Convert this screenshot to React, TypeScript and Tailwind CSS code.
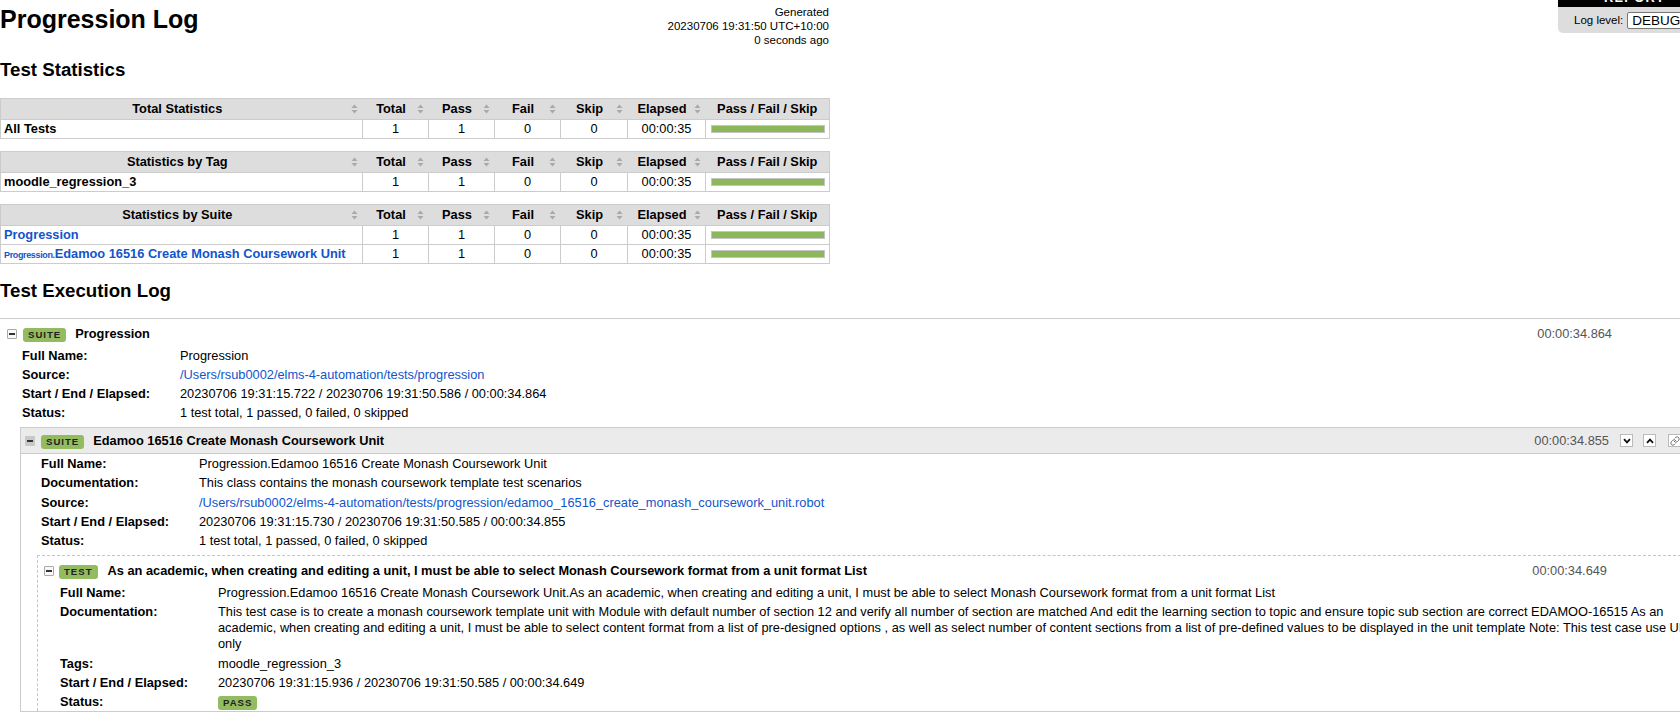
import React from "react";
import { Link as LinkIcon } from "lucide-react";

type StatRow = {
  name: React.ReactNode;
  total: number;
  pass: number;
  fail: number;
  skip: number;
  elapsed: string;
};

type MetaRow = {
  label: string;
  value: React.ReactNode;
  doc?: boolean;
};

const SortIcon = () => (
  <svg width="7" height="10" viewBox="0 0 7 10" className="shrink-0">
    <path d="M3.5 0.5 L6.5 4 H0.5 Z" fill="#a9a9a9" />
    <path d="M3.5 9.5 L6.5 6 H0.5 Z" fill="#a9a9a9" />
  </svg>
);

function SortHeader({ label, width }: { label: string; width: string }) {
  return (
    <th className={`${width} px-[5px] font-bold`}>
      <div className="flex items-center gap-[2px]">
        <span className="flex-1 text-center">{label}</span>
        <SortIcon />
      </div>
    </th>
  );
}

function StatTable({ title, rows }: { title: string; rows: StatRow[] }) {
  return (
    <table className="mb-[12px] w-[829px] table-fixed border-collapse border border-[#ccc]">
      <thead>
        <tr className="h-[21px] bg-[#ddd]">
          <SortHeader label={title} width="w-[362px]" />
          <SortHeader label="Total" width="w-[66px]" />
          <SortHeader label="Pass" width="w-[66px]" />
          <SortHeader label="Fail" width="w-[66px]" />
          <SortHeader label="Skip" width="w-[67px]" />
          <SortHeader label="Elapsed" width="w-[78px]" />
          <th className="w-[124px] px-[3px] text-center font-bold">Pass / Fail / Skip</th>
        </tr>
      </thead>
      <tbody>
        {rows.map((r, i) => (
          <tr key={i} className="h-[19px]">
            <td className="overflow-hidden whitespace-nowrap border border-[#ccc] px-[3px] font-bold">{r.name}</td>
            <td className="border border-[#ccc] text-center">{r.total}</td>
            <td className="border border-[#ccc] text-center">{r.pass}</td>
            <td className="border border-[#ccc] text-center">{r.fail}</td>
            <td className="border border-[#ccc] text-center">{r.skip}</td>
            <td className="border border-[#ccc] text-center">{r.elapsed}</td>
            <td className="border border-[#ccc] pl-[5px] pr-[4px]">
              <div className="h-[8px] border border-[#c4c4c4] bg-[#8db75b]" />
            </td>
          </tr>
        ))}
      </tbody>
    </table>
  );
}

function Toggle({ filled }: { filled?: boolean }) {
  return (
    <div
      className={
        filled
          ? "flex h-[10px] w-[10px] shrink-0 items-center justify-center rounded-[1px] bg-[#c8c8c8]"
          : "flex h-[10px] w-[10px] shrink-0 items-center justify-center rounded-[1px] border border-[#aaa] bg-[#f8f8f8]"
      }
    >
      <div className="h-[2px] w-[6px] bg-[#333]" />
    </div>
  );
}

function Badge({ children }: { children: React.ReactNode }) {
  return (
    <span className="inline-block shrink-0 rounded-[3px] bg-[#93bb5f] px-[5px] py-[2px] text-[9.6px] font-bold leading-[10px] tracking-[1px] text-[#222]">
      {children}
    </span>
  );
}

function HeaderButtons({ show }: { show?: boolean }) {
  return (
    <div className={show ? "ml-[11px] flex items-center" : "invisible ml-[11px] flex items-center"}>
      <div className="flex h-[13px] w-[13px] items-center justify-center border border-[#bbb] bg-white">
        <svg width="8" height="6" viewBox="0 0 8 6">
          <path d="M1 1.2 L4 4.4 L7 1.2" fill="none" stroke="#111" strokeWidth="1.8" />
        </svg>
      </div>
      <div className="ml-[10px] flex h-[13px] w-[13px] items-center justify-center border border-[#bbb] bg-white">
        <svg width="8" height="6" viewBox="0 0 8 6">
          <path d="M1 4.8 L4 1.6 L7 4.8" fill="none" stroke="#111" strokeWidth="1.8" />
        </svg>
      </div>
      <div className="ml-[12px] flex h-[13px] w-[13px] items-center justify-center border border-[#bbb] bg-white">
        <LinkIcon size={10} color="#555" strokeWidth={2} />
      </div>
    </div>
  );
}

function Meta({ rows, indent }: { rows: MetaRow[]; indent: string }) {
  return (
    <div className={indent}>
      {rows.map((r) => (
        <div
          key={r.label}
          className={r.doc ? "grid grid-cols-[158px_1fr] pb-[2px] pt-[2px]" : "grid grid-cols-[158px_1fr] py-[1.5px]"}
        >
          <div className="font-bold">{r.label}</div>
          <div className="whitespace-nowrap">{r.value}</div>
        </div>
      ))}
    </div>
  );
}

const link = "text-[#15c]";

export default function App() {
  return (
    <div className="relative h-[714px] w-[1680px] overflow-hidden bg-white font-['Liberation_Sans',Arial,sans-serif] text-[12.8px] leading-[16px] text-black">
      {/* report link + log level */}
      <div className="absolute right-0 top-0 w-[122px] overflow-hidden">
        <div className="h-[7px] overflow-hidden bg-black">
          <div className="-mt-[10px] whitespace-nowrap pl-[46px] font-bold leading-[16px] tracking-[0.1em] text-white">REPORT</div>
        </div>
        <div className="flex h-[26px] items-center whitespace-nowrap rounded-bl-[5px] bg-[#ddd] pl-[16px]">
          <span className="shrink-0 text-[11.5px]">Log level:</span>
          <div className="ml-[4px] flex h-[17px] shrink-0 items-center rounded-[2px] border border-[#777] bg-white pl-[4px] pr-[10px] text-[13.5px] leading-[15px]">
            DEBUG
          </div>
        </div>
      </div>

      <div className="flex h-[59px] w-[829px] items-start justify-between pt-[4px]">
        <h1 className="text-[25px] font-bold leading-[30px]">Progression Log</h1>
        <div className="pt-[1px] text-right text-[11.5px] leading-[14px]">
          <div>Generated</div>
          <div>20230706 19:31:50 UTC+10:00</div>
          <div>0 seconds ago</div>
        </div>
      </div>

      <h2 className="text-[18.7px] font-bold leading-[22px]">Test Statistics</h2>
      <div className="mt-[17px]">
        <StatTable
          title="Total Statistics"
          rows={[{ name: "All Tests", total: 1, pass: 1, fail: 0, skip: 0, elapsed: "00:00:35" }]}
        />
        <StatTable
          title="Statistics by Tag"
          rows={[{ name: "moodle_regression_3", total: 1, pass: 1, fail: 0, skip: 0, elapsed: "00:00:35" }]}
        />
        <StatTable
          title="Statistics by Suite"
          rows={[
            { name: <a className={link}>Progression</a>, total: 1, pass: 1, fail: 0, skip: 0, elapsed: "00:00:35" },
            {
              name: (
                <a className={link}>
                  <span className="text-[9px] tracking-[-0.04em]">Progression.</span>
                  Edamoo 16516 Create Monash Coursework Unit
                </a>
              ),
              total: 1,
              pass: 1,
              fail: 0,
              skip: 0,
              elapsed: "00:00:35",
            },
          ]}
        />
      </div>

      <h2 className="mt-[16px] text-[18.7px] font-bold leading-[22px]">Test Execution Log</h2>

      <div className="mt-[16px] w-[1692px] border-t border-[#ccc]">
        {/* top suite */}
        <div className="mt-[3px] flex h-[24px] items-center pl-[7px] pr-[8px]">
          <Toggle />
          <span className="ml-[6px]">
            <Badge>SUITE</Badge>
          </span>
          <span className="ml-[9px] font-bold">Progression</span>
          <span className="ml-auto text-[#555]">00:00:34.864</span>
          <HeaderButtons />
        </div>
        <Meta
          indent="pl-[22px]"
          rows={[
            { label: "Full Name:", value: "Progression" },
            { label: "Source:", value: <a className={link}>/Users/rsub0002/elms-4-automation/tests/progression</a> },
            { label: "Start / End / Elapsed:", value: "20230706 19:31:15.722 / 20230706 19:31:50.586 / 00:00:34.864" },
            { label: "Status:", value: "1 test total, 1 passed, 0 failed, 0 skipped" },
          ]}
        />

        {/* child suite */}
        <div className="ml-[20px] mt-[5px] border border-[#ccc]">
          <div className="flex h-[26px] items-center border-b border-[#ccc] bg-[#ebebeb] pl-[4px] pr-[10px]">
            <Toggle filled />
            <span className="ml-[6px]">
              <Badge>SUITE</Badge>
            </span>
            <span className="ml-[9px] font-bold">Edamoo 16516 Create Monash Coursework Unit</span>
            <span className="ml-auto text-[#555]">00:00:34.855</span>
            <HeaderButtons show />
          </div>
          <Meta
            indent="pl-[20px]"
            rows={[
              { label: "Full Name:", value: "Progression.Edamoo 16516 Create Monash Coursework Unit" },
              { label: "Documentation:", value: "This class contains the monash coursework template test scenarios", doc: true },
              {
                label: "Source:",
                value: (
                  <a className={link}>
                    /Users/rsub0002/elms-4-automation/tests/progression/edamoo_16516_create_monash_coursework_unit.robot
                  </a>
                ),
              },
              { label: "Start / End / Elapsed:", value: "20230706 19:31:15.730 / 20230706 19:31:50.585 / 00:00:34.855" },
              { label: "Status:", value: "1 test total, 1 passed, 0 failed, 0 skipped" },
            ]}
          />

          {/* test */}
          <div className="ml-[16px] mt-[5px] border-l border-t border-dashed border-[#c4c4c4]">
            <div className="mt-[3px] flex h-[24px] items-center pl-[6px] pr-[12px]">
              <Toggle />
              <span className="ml-[5px]">
                <Badge>TEST</Badge>
              </span>
              <span className="ml-[10px] font-bold">
                As an academic, when creating and editing a unit, I must be able to select Monash Coursework format from a unit format List
              </span>
              <span className="ml-auto text-[#555]">00:00:34.649</span>
              <HeaderButtons />
            </div>
            <Meta
              indent="pl-[22px]"
              rows={[
                {
                  label: "Full Name:",
                  value:
                    "Progression.Edamoo 16516 Create Monash Coursework Unit.As an academic, when creating and editing a unit, I must be able to select Monash Coursework format from a unit format List",
                },
                {
                  label: "Documentation:",
                  doc: true,
                  value: (
                    <>
                      This test case is to create a monash coursework template unit with Module with default number of section 12 and verify all number of section are matched And edit the learning section to topic and ensure topic sub section are correct EDAMOO-16515 As an
                      <br />
                      academic, when creating and editing a unit, I must be able to select content format from a list of pre-designed options , as well as select number of content sections from a list of pre-defined values to be displayed in the unit template Note: This test case use UI
                      <br />
                      only
                    </>
                  ),
                },
                { label: "Tags:", value: "moodle_regression_3" },
                { label: "Start / End / Elapsed:", value: "20230706 19:31:15.936 / 20230706 19:31:50.585 / 00:00:34.649" },
                { label: "Status:", value: <Badge>PASS</Badge> },
              ]}
            />
          </div>
        </div>
      </div>
    </div>
  );
}
